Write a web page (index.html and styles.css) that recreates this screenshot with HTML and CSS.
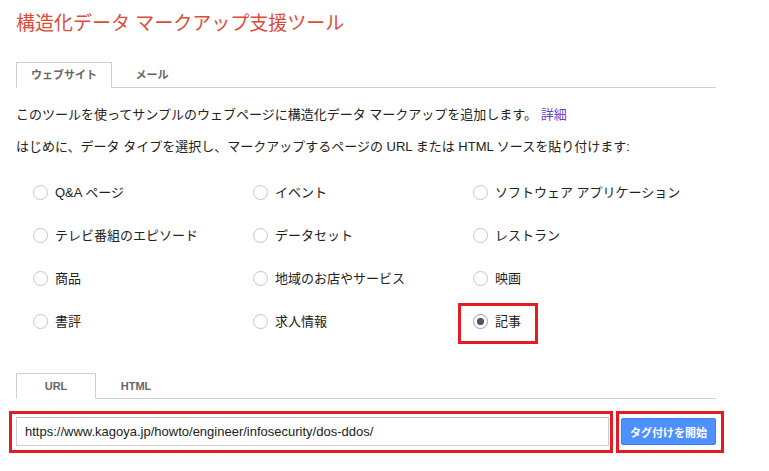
FILE: index.html
```html
<!DOCTYPE html>
<html lang="ja">
<head>
<meta charset="utf-8">
<title>構造化データ マークアップ支援ツール</title>
<link rel="stylesheet" href="styles.css">
</head>
<body>
<div class="page">
  <h1 class="title">構造化データ マークアップ支援ツール</h1>

  <div class="tabs tabs-top">
    <div class="tab active">ウェブサイト</div>
    <div class="tab">メール</div>
  </div>

  <p class="intro first">このツールを使ってサンプルのウェブページに構造化データ マークアップを追加します。 <a class="more" href="#">詳細</a></p>
  <p class="intro second">はじめに、データ タイプを選択し、マークアップするページの URL または HTML ソースを貼り付けます:</p>

  <div class="types">
    <label class="type"><input type="radio" name="t" class="radio"><span>Q&amp;A ページ</span></label>
    <label class="type"><input type="radio" name="t" class="radio"><span>イベント</span></label>
    <label class="type"><input type="radio" name="t" class="radio"><span>ソフトウェア アプリケーション</span></label>
    <label class="type"><input type="radio" name="t" class="radio"><span>テレビ番組のエピソード</span></label>
    <label class="type"><input type="radio" name="t" class="radio"><span>データセット</span></label>
    <label class="type"><input type="radio" name="t" class="radio"><span>レストラン</span></label>
    <label class="type"><input type="radio" name="t" class="radio"><span>商品</span></label>
    <label class="type"><input type="radio" name="t" class="radio"><span>地域のお店やサービス</span></label>
    <label class="type"><input type="radio" name="t" class="radio"><span>映画</span></label>
    <label class="type"><input type="radio" name="t" class="radio"><span>書評</span></label>
    <label class="type"><input type="radio" name="t" class="radio"><span>求人情報</span></label>
    <label class="type marked"><input type="radio" name="t" class="radio" checked><span>記事</span></label>
  </div>

  <div class="tabs tabs-src">
    <div class="tab active">URL</div>
    <div class="tab">HTML</div>
  </div>

  <div class="submit-row">
    <div class="mark mark-url"><input class="url-input" type="text" value="https://www.kagoya.jp/howto/engineer/infosecurity/dos-ddos/"></div>
    <div class="mark mark-btn"><button class="start" type="button">タグ付けを開始</button></div>
  </div>
</div>
</body>
</html>
```

FILE: styles.css
```css
* { box-sizing: border-box; }

html, body {
  margin: 0;
  padding: 0;
  background: #fff;
}

body {
  font-family: "Liberation Sans", Arial, "Noto Sans CJK JP", sans-serif;
  font-size: 13px;
  color: #222;
}

.page {
  padding: 0 0 0 16px;
  width: 740px;
}

.title {
  margin: 12px 0 0;
  font-size: 19px;
  line-height: 24px;
  font-weight: normal;
  color: #dd4b39;
}

.tabs {
  display: flex;
  width: 700px;
  height: 26px;
  border-bottom: 1px solid #cfcfcf;
}

.tabs-top { margin-top: 26px; }
.tabs-src { margin-top: 30px; }

.tab {
  min-width: 80px;
  height: 26px;
  padding: 0 14px;
  border: 1px solid transparent;
  text-align: center;
  font-size: 11px;
  font-weight: bold;
  line-height: 24px;
  color: #666;
}

.tab.active {
  border-color: #cfcfcf;
  border-bottom-color: #fff;
  background: #fff;
}

.intro {
  margin: 0;
  line-height: 20px;
}

.intro.first { margin-top: 17px; }
.intro.second { margin-top: 12px; }

.more {
  color: #6a3fc8;
  text-decoration: none;
}

.types {
  margin-top: 14px;
  padding-left: 17px;
  display: grid;
  grid-template-columns: 220px 220px 220px;
  grid-auto-rows: 43px;
}

.type {
  display: flex;
  align-items: center;
  gap: 7px;
  line-height: 18px;
}

.radio {
  appearance: none;
  -webkit-appearance: none;
  width: 15px;
  height: 15px;
  margin: 0;
  border: 1px solid #c6c6c6;
  border-radius: 50%;
  background: #fff;
  flex: none;
}

.radio:checked {
  border-color: #7aa5ee;
  background: radial-gradient(circle, #555 0, #555 3.3px, #fff 4px);
}

.marked {
  position: relative;
}

.marked::after {
  content: "";
  position: absolute;
  left: -15px;
  top: 3px;
  width: 74px;
  height: 35px;
  border: 3px solid #e41b23;
}

.submit-row {
  display: flex;
  gap: 3px;
  margin-top: 12px;
  margin-left: -7px;
}

.mark {
  border: 3px solid #e41b23;
  height: 42px;
}

.mark-url {
  width: 604px;
  padding: 3px 1px 4px 4px;
}

.mark-btn {
  width: 108px;
  padding: 4px 5px 5px 2px;
}

.url-input {
  display: block;
  width: 593px;
  height: 29px;
  margin: 0;
  padding: 0 8px;
  border: 1px solid #cdcdcd;
  border-top-color: #bdbdbd;
  font-family: "Liberation Sans", Arial, sans-serif;
  font-size: 13px;
  color: #222;
  outline: none;
}

.start {
  display: block;
  width: 95px;
  height: 27px;
  margin: 0;
  padding: 0;
  border: 1px solid #3b82f0;
  border-radius: 2px;
  background: #4d90fe;
  color: #fff;
  font-family: "Noto Sans CJK JP", sans-serif;
  font-size: 11px;
  font-weight: bold;
}
```
